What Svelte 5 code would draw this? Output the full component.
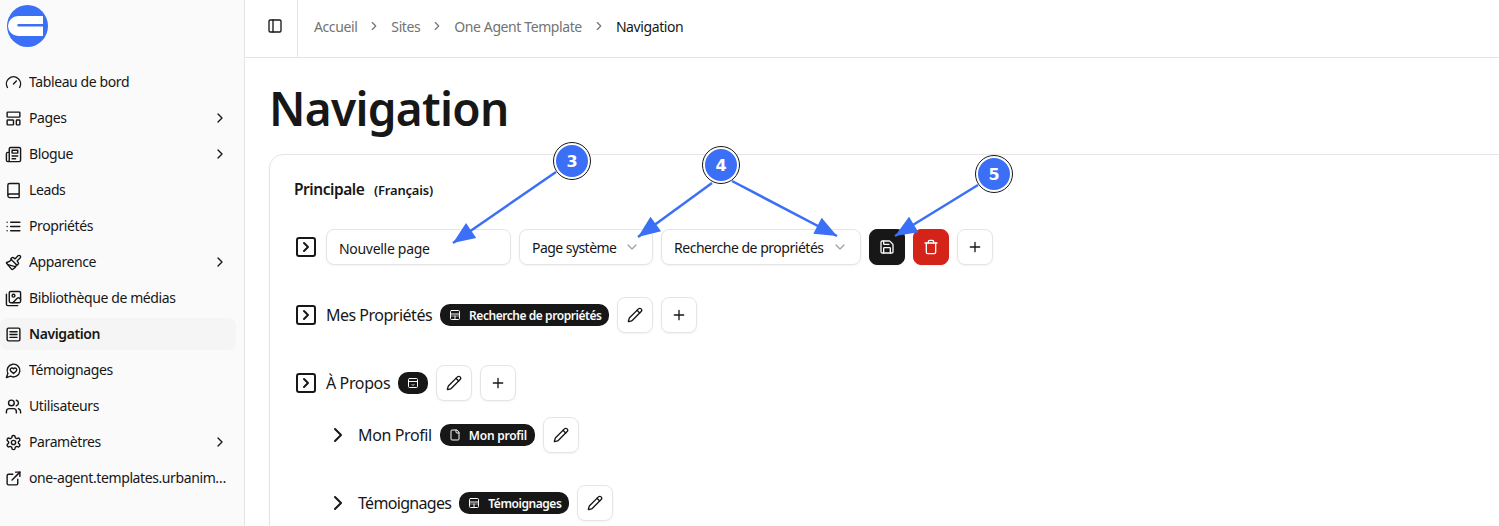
<script>
  const p = {
    gauge: '<path d="m12 14 4-4"/><path d="M3.34 19a10 10 0 1 1 17.32 0"/>',
    layout: '<rect width="18" height="7" x="3" y="3" rx="1"/><rect width="9" height="7" x="3" y="14" rx="1"/><rect width="5" height="7" x="16" y="14" rx="1"/>',
    news: '<path d="M4 22h16a2 2 0 0 0 2-2V4a2 2 0 0 0-2-2H8a2 2 0 0 0-2 2v16a2 2 0 0 1-2 2Zm0 0a2 2 0 0 1-2-2v-9c0-1.1.9-2 2-2h2"/><path d="M18 14h-8"/><path d="M15 18h-5"/><path d="M10 6h8v4h-8V6Z"/>',
    book: '<path d="M4 19.5v-15A2.5 2.5 0 0 1 6.5 2H19a1 1 0 0 1 1 1v18a1 1 0 0 1-1 1H6.5a1 1 0 0 1 0-5H20"/>',
    list: '<path d="M3 12h.01M3 18h.01M3 6h.01M8 12h13M8 18h13M8 6h13"/>',
    brush: '<path d="m14.622 17.897-10.68-2.913"/><path d="M18.376 2.622a1 1 0 1 1 3.002 3.002L17.36 9.643a.5.5 0 0 0 0 .707l.944.944a2.41 2.41 0 0 1 0 3.408l-.944.944a.5.5 0 0 1-.707 0L8.354 7.348a.5.5 0 0 1 0-.707l.944-.944a2.41 2.41 0 0 1 3.408 0l.944.944a.5.5 0 0 0 .707 0z"/><path d="M9 8c-1.804 2.71-3.97 3.46-6.583 3.948a.507.507 0 0 0-.302.819l7.32 8.883a1 1 0 0 0 1.185.204C12.735 20.405 16 16.792 16 15"/>',
    images: '<path d="M18 22H4a2 2 0 0 1-2-2V6"/><path d="m22 13-1.296-1.296a2.41 2.41 0 0 0-3.408 0L11 18"/><circle cx="12" cy="8" r="2"/><rect width="16" height="16" x="6" y="2" rx="2"/>',
    menu: '<rect width="18" height="18" x="3" y="3" rx="2"/><path d="M7 8h10M7 12h10M7 16h10"/>',
    heart: '<path d="M7.9 20A9 9 0 1 0 4 16.1L2 22Z"/><path d="M15.8 9.2a2.5 2.5 0 0 0-3.5 0l-.3.4-.35-.3a2.42 2.42 0 1 0-3.2 3.6l3.6 3.5 3.6-3.5c1.2-1.2 1.1-2.7.2-3.7"/>',
    users: '<path d="M16 21v-2a4 4 0 0 0-4-4H6a4 4 0 0 0-4 4v2"/><circle cx="9" cy="7" r="4"/><path d="M22 21v-2a4 4 0 0 0-3-3.87"/><path d="M16 3.13a4 4 0 0 1 0 7.75"/>',
    settings: '<path d="M12.22 2h-.44a2 2 0 0 0-2 2v.18a2 2 0 0 1-1 1.73l-.43.25a2 2 0 0 1-2 0l-.15-.08a2 2 0 0 0-2.73.73l-.22.38a2 2 0 0 0 .73 2.73l.15.1a2 2 0 0 1 1 1.72v.51a2 2 0 0 1-1 1.74l-.15.09a2 2 0 0 0-.73 2.73l.22.38a2 2 0 0 0 2.73.73l.15-.08a2 2 0 0 1 2 0l.43.25a2 2 0 0 1 1 1.73V20a2 2 0 0 0 2 2h.44a2 2 0 0 0 2-2v-.18a2 2 0 0 1 1-1.73l.43-.25a2 2 0 0 1 2 0l.15.08a2 2 0 0 0 2.73-.73l.22-.39a2 2 0 0 0-.73-2.73l-.15-.08a2 2 0 0 1-1-1.74v-.5a2 2 0 0 1 1-1.74l.15-.09a2 2 0 0 0 .73-2.73l-.22-.38a2 2 0 0 0-2.73-.73l-.15.08a2 2 0 0 1-2 0l-.43-.25a2 2 0 0 1-1-1.73V4a2 2 0 0 0-2-2z"/><circle cx="12" cy="12" r="3"/>',
    ext: '<path d="M15 3h6v6"/><path d="M10 14 21 3"/><path d="M18 13v6a2 2 0 0 1-2 2H5a2 2 0 0 1-2-2V8a2 2 0 0 1 2-2h6"/>',
    panel: '<rect width="18" height="18" x="3" y="3" rx="2"/><path d="M9 3v18"/>',
    save: '<path d="M15.2 3a2 2 0 0 1 1.4.6l3.8 3.8a2 2 0 0 1 .6 1.4V19a2 2 0 0 1-2 2H5a2 2 0 0 1-2-2V5a2 2 0 0 1 2-2z"/><path d="M17 21v-7a1 1 0 0 0-1-1H8a1 1 0 0 0-1 1v7"/><path d="M7 3v4a1 1 0 0 0 1 1h7"/>',
    trash: '<path d="M3 6h18"/><path d="M19 6v14c0 1-1 2-2 2H7c-1 0-2-1-2-2V6"/><path d="M8 6V4c0-1 1-2 2-2h4c1 0 2 1 2 2v2"/>',
    plus: '<path d="M5 12h14M12 5v14"/>',
    pencil: '<path d="M21.174 6.812a1 1 0 0 0-3.986-3.987L3.842 16.174a2 2 0 0 0-.5.83l-1.321 4.352a.5.5 0 0 0 .623.622l4.353-1.32a2 2 0 0 0 .83-.497z"/><path d="m15 5 4 4"/>',
    down: '<path d="m6 9 6 6 6-6"/>',
    right: '<path d="m9 18 6-6-6-6"/>',
    sqright: '<rect width="18" height="18" x="3" y="3" rx="2"/><path d="m10 8 4 4-4 4"/>',
    file: '<path d="M15 2H6a2 2 0 0 0-2 2v16a2 2 0 0 0 2 2h12a2 2 0 0 0 2-2V7Z"/><path d="M14 2v4a2 2 0 0 0 2 2h4"/>',
    panelTop: '<rect width="18" height="18" x="3" y="3" rx="2"/><path d="M3 10h18"/><path d="M3 14h18" opacity=".6"/><path d="M12 14v7"/>',
    archive: '<rect width="18" height="18" x="3" y="3" rx="2"/><path d="M3 9h18"/><path d="m10 15 2 2 2-2"/>'
  };
  const nav = [
    ['gauge', 'Tableau de bord'],
    ['layout', 'Pages', true],
    ['news', 'Blogue', true],
    ['book', 'Leads'],
    ['list', 'Propriétés'],
    ['brush', 'Apparence', true],
    ['images', 'Bibliothèque de médias'],
    ['menu', 'Navigation', false, true],
    ['heart', 'Témoignages'],
    ['users', 'Utilisateurs'],
    ['settings', 'Paramètres', true],
    ['ext', 'one-agent.templates.urbanimmobilier.com']
  ];
  const crumbs = ['Accueil', 'Sites', 'One Agent Template'];
  const marks = [
    { n: 3, x: 572, y: 161 },
    { n: 4, x: 721, y: 165 },
    { n: 5, x: 994, y: 174 }
  ];
  const arrows = [
    [556, 172, 453, 243],
    [712, 183, 638, 237],
    [732, 181, 837, 236],
    [978, 185, 895, 236]
  ];
  function head(a) {
    const [x1, y1, x2, y2] = a;
    const d = Math.hypot(x2 - x1, y2 - y1);
    const ux = (x2 - x1) / d, uy = (y2 - y1) / d;
    const L = 22, W = 9;
    const bx = x2 - ux * L, by = y2 - uy * L;
    return `${x2},${y2} ${bx - uy * W},${by + ux * W} ${bx + uy * W},${by - ux * W}`;
  }
</script>

{#snippet icon(name, size = 16, sw = 2)}
  <svg class="ic" width={size} height={size} viewBox="0 0 24 24" fill="none" stroke="currentColor" stroke-width={sw} stroke-linecap="round" stroke-linejoin="round">{@html p[name]}</svg>
{/snippet}

{#snippet tag(name, text, cls = '')}
  <span class="tag {cls}" class:solo={!text}>
    {@render icon(name, 12)}
    {#if text}<b>{text}</b>{/if}
  </span>
{/snippet}

{#snippet btn(name, cls = '')}
  <button class="btn {cls}">{@render icon(name, 16)}</button>
{/snippet}

<div class="app">
  <aside class="side">
    <div class="logo">
      <svg width="41" height="42" viewBox="0 0 41 42">
        <ellipse cx="20.5" cy="21" rx="20.5" ry="21" fill="#3b6ff5" />
        <path d="M36 11H11a10 10 0 0 0 0 20h25v-9.5H11.5a1.25 1.25 0 0 1 0-2.5H36z" fill="#fff"/>
      </svg>
    </div>
    <nav class="nav">
      {#each nav as [ic, label, more, active]}
        <a class="item" class:active>
          {@render icon(ic, 17)}
          <span class="lab">{label}</span>
          {#if more}<span class="more">{@render icon('right')}</span>{/if}
        </a>
      {/each}
    </nav>
  </aside>

  <main class="main">
    <header class="top">
      <div class="toggle">{@render icon('panel')}</div>
      <ol class="crumbs">
        {#each crumbs as c}
          <li>{c}</li>
          <li class="sep">{@render icon('right', 14)}</li>
        {/each}
        <li class="now">Navigation</li>
      </ol>
    </header>
    <div class="content">
      <h1>Navigation</h1>
      <section class="card">
        <h2>Principale <small>(Français)</small></h2>
        <div class="tree">
          <div class="row">
            {@render icon('sqright', 24)}
            <div class="field input">Nouvelle page</div>
            <div class="field sel1">Page système {@render icon('down')}</div>
            <div class="field sel2">Recherche de propriétés {@render icon('down')}</div>
            {@render btn('save', 'dark')}
            {@render btn('trash', 'red')}
            {@render btn('plus')}
          </div>
          <div class="row">
            {@render icon('sqright', 24)}
            <span class="label">Mes Propriétés</span>
            {@render tag('panelTop', 'Recherche de propriétés')}
            {@render btn('pencil')}
            {@render btn('plus')}
          </div>
          <div class="group">
            <div class="row">
              {@render icon('sqright', 24)}
              <span class="label wide">À Propos</span>
              {@render tag('archive', '')}
              {@render btn('pencil')}
              {@render btn('plus')}
            </div>
            <div class="sub">
              <div class="row">
                {@render icon('right', 24)}
                <span class="label wide">Mon Profil</span>
                {@render tag('file', 'Mon profil', 'loose')}
                {@render btn('pencil')}
              </div>
              <div class="row">
                {@render icon('right', 24)}
                <span class="label tight">Témoignages</span>
                {@render tag('panelTop', 'Témoignages')}
                {@render btn('pencil')}
              </div>
            </div>
          </div>
        </div>
      </section>
    </div>
  </main>

  <svg class="anno" width="1499" height="526" viewBox="0 0 1499 526">
    {#each arrows as a}
      <line x1={a[0]} y1={a[1]} x2={a[2]} y2={a[3]} stroke="#3b6ff5" stroke-width="2.5" />
      <polygon points={head(a)} fill="#3b6ff5" />
    {/each}
  </svg>
  {#each marks as m}
    <span class="mark" style="left:{m.x - 18}px;top:{m.y - 18}px">{m.n}</span>
  {/each}
</div>

<style>
  :global(body) { margin: 0; background: #fff; overflow: hidden; }
  .app {
    position: relative; display: flex; width: 1499px; height: 526px; overflow: hidden;
    font-family: "Noto Sans", "Open Sans", sans-serif; color: #171717; font-size: 14px;
    letter-spacing: -0.4px;
  }
  .ic { display: block; flex: none; }
  .side { width: 244px; flex: none; background: #fafafa; border-right: 1px solid #e5e5e5; box-sizing: content-box; }
  .logo { height: 66px; padding: 5px 0 0 7px; box-sizing: border-box; }
  .logo svg { display: block; }
  .nav { display: flex; flex-direction: column; gap: 4px; padding-right: 8px; }
  .item {
    display: flex; align-items: center; gap: 7px; height: 32px; padding: 0 7px 0 5px;
    border-radius: 8px; line-height: 20px; color: #171717;
  }
  .item.active { background: #f5f5f5; font-weight: 600; }
  .lab { flex: 1; min-width: 0; white-space: nowrap; overflow: hidden; text-overflow: ellipsis; }
  .more { flex: none; margin-right: 1px; }
  .main { flex: 1; min-width: 0; }
  .top { display: flex; align-items: stretch; height: 58px; box-sizing: border-box; border-bottom: 1px solid #e5e5e5; }
  .toggle { width: 53px; display: flex; align-items: center; justify-content: center; border-right: 1px solid #e5e5e5; padding: 0 0 5px 8px; box-sizing: border-box; }
  .crumbs { display: flex; align-items: center; gap: 10px; list-style: none; margin: 0; padding: 0 0 5px 16px; color: #737373; }
  .now { color: #171717; }
  .content { padding: 18px 0 0 24px; }
  h1 { margin: 0 0 14px; font-size: 46px; letter-spacing: -0.7px; line-height: 64px; font-weight: 600; color: #171717; }
  .card { width: 1400px; border: 1px solid #e5e5e5; border-radius: 14px; padding: 24px; box-sizing: border-box; height: 500px; box-shadow: 0 1px 2px rgba(0,0,0,.05); }
  h2 { margin: 0 0 29px; font-size: 15.5px; letter-spacing: -0.45px; line-height: 20px; font-weight: 600; }
  small { font-size: 13px; font-weight: 600; margin-left: 6px; letter-spacing: -0.2px; }
  .tree { display: flex; flex-direction: column; gap: 32px; }
  .group, .sub { display: flex; flex-direction: column; }
  .group { gap: 16px; }
  .sub { gap: 32px; padding-left: 32px; }
  .row { display: flex; align-items: center; gap: 8px; height: 36px; }
  .label { font-size: 16px; letter-spacing: -0.5px; line-height: 24px; color: #171717; }
  .label.wide { letter-spacing: -0.38px; }
  .label.tight { letter-spacing: -0.68px; }
  .field {
    display: flex; align-items: center; justify-content: space-between; box-sizing: border-box; height: 36px; padding: 0 12px;
    border: 1px solid #e5e5e5; border-radius: 8px; background: #fff; box-shadow: 0 1px 2px rgba(0,0,0,.05);
    white-space: nowrap; color: #171717;
  }
  .field .ic { color: #a3a3a3; }
  .input { width: 185px; padding-top: 2px; letter-spacing: -0.3px; }
  .sel1 { width: 134px; letter-spacing: -0.55px; }
  .sel2 { width: 200px; letter-spacing: -0.48px; }
  .btn {
    display: flex; align-items: center; justify-content: center; width: 36px; height: 36px; padding: 0;
    border: 1px solid #e5e5e5; border-radius: 8px; background: #fff; color: #171717;
    box-shadow: 0 1px 2px rgba(0,0,0,.05); font: inherit;
  }
  .btn.dark { background: #171717; border-color: #171717; color: #fafafa; }
  .btn.red { background: #d42318; border-color: #d42318; color: #fff; }
  .tag {
    display: inline-flex; align-items: center; gap: 8px; height: 22px; box-sizing: border-box; padding: 0 8px 0 9px;
    border-radius: 10px; background: #171717; color: #fafafa; font-size: 12px; letter-spacing: -0.45px;
  }
  .tag.solo { padding: 0 9px; }
  .tag.loose { letter-spacing: -0.25px; }
  .tag b { font-weight: 600; }
  .anno { position: absolute; left: 0; top: 0; pointer-events: none; }
  .mark {
    position: absolute; width: 36px; height: 36px; box-sizing: border-box; border-radius: 50%;
    display: flex; align-items: center; justify-content: center;
    background: #3b6ff5; border: 2px solid #fff; outline: 1px solid #171717;
    color: #fff; font-family: "DejaVu Sans", sans-serif; font-weight: 700; font-size: 16px; letter-spacing: 0;
  }
</style>
